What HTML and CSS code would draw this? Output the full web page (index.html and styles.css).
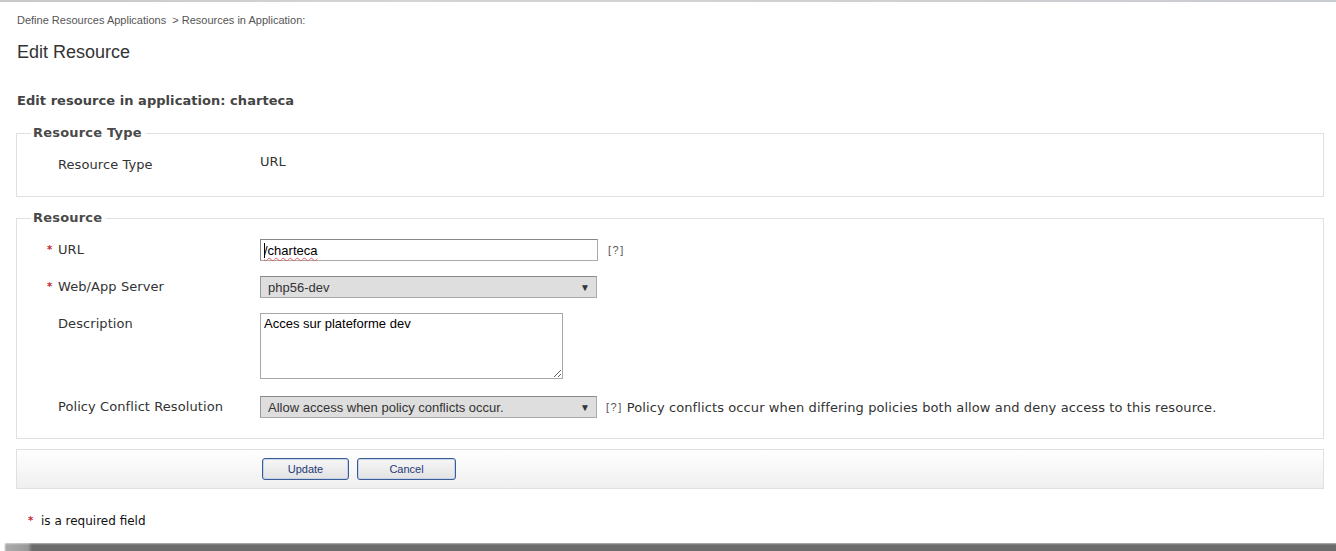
FILE: index.html
```html
<!DOCTYPE html>
<html>
<head>
<meta charset="utf-8">
<title>Edit Resource</title>
<link rel="stylesheet" href="styles.css">
</head>
<body>
<div class="topline"></div>
<div class="page">
  <div class="crumbs">Define Resources Applications&nbsp; &gt; Resources in Application:</div>
  <h1 class="title">Edit Resource</h1>
  <h2 class="subtitle">Edit resource in application: charteca</h2>

  <fieldset class="box box-type">
    <legend>Resource Type</legend>
    <div class="row">
      <div class="lbl">Resource Type</div>
      <div class="val">URL</div>
    </div>
  </fieldset>

  <fieldset class="box box-res">
    <legend>Resource</legend>
    <div class="row">
      <div class="lbl"><span class="req">*</span>URL</div>
      <div class="ctl">
        <div class="input"><span class="caret"></span><span class="spell">/charteca</span></div>
        <span class="help">[?]</span>
      </div>
    </div>
    <div class="row">
      <div class="lbl"><span class="req">*</span>Web/App Server</div>
      <div class="ctl">
        <div class="select"><span>php56-dev</span><span class="arrow">&#9660;</span></div>
      </div>
    </div>
    <div class="row row-top">
      <div class="lbl lbl-top">Description</div>
      <div class="ctl">
        <textarea class="area">Acces sur plateforme dev</textarea>
      </div>
    </div>
    <div class="row">
      <div class="lbl">Policy Conflict Resolution</div>
      <div class="ctl">
        <div class="select"><span>Allow access when policy conflicts occur.</span><span class="arrow">&#9660;</span></div>
        <span class="help help-policy">[?]</span>
        <span class="note">Policy conflicts occur when differing policies both allow and deny access to this resource.</span>
      </div>
    </div>
  </fieldset>

  <div class="bar">
    <button class="btn btn-update">Update</button>
    <button class="btn btn-cancel">Cancel</button>
  </div>

  <div class="required"><span class="req2">*</span>is a required field</div>
</div>
<div class="shadow"></div>
</body>
</html>
```

FILE: styles.css
```css
html, body {
  margin: 0;
  padding: 0;
  background: #fff;
  overflow: hidden;
}
body {
  height: 551px;
  position: relative;
  font-family: "DejaVu Sans", Verdana, sans-serif;
  color: #333;
}
.topline {
  height: 2px;
  background: linear-gradient(to right, #c8c8c8, #d4d4d4 30%, #c9ccd0);
}
.page {
  padding: 0 12px 0 16px;
}
.crumbs {
  margin-top: 11px;
  padding-left: 1px;
  font-family: "Liberation Sans", Arial, sans-serif;
  font-size: 11px;
  line-height: 14px;
  color: #555;
}
.title {
  margin: 14px 0 0 1px;
  font-family: "Liberation Sans", Arial, sans-serif;
  font-weight: normal;
  font-size: 18px;
  line-height: 22px;
  color: #333;
}
.subtitle {
  margin: 30px 0 0 1px;
  font-size: 13px;
  line-height: 16px;
  font-weight: bold;
  letter-spacing: 0.05px;
  color: #444;
}
.box {
  margin: 0;
  border: 1px solid #e0e0e0;
  padding: 0 0 20px 14px;
  min-width: 0;
}
.box legend {
  padding: 0 4px 0 2px;
  font-size: 13px;
  font-weight: bold;
  line-height: 18px;
  letter-spacing: 0.2px;
  color: #4a4a4a;
}
.box-type {
  margin-top: 15px;
}
.box-type .row {
  margin-top: 12px;
}
.box-res {
  margin-top: 12px;
}
.box-res .row {
  margin-top: 15px;
}
.box-res .row:first-of-type {
  margin-top: 12px;
}
.box-res .row:last-child {
  margin-top: 17px;
}
.row {
  display: flex;
  align-items: center;
  min-height: 22px;
  margin-left: 27px;
}
.row-top {
  align-items: flex-start;
}
.lbl {
  width: 202px;
  flex: none;
  font-size: 13px;
  line-height: 16px;
  letter-spacing: 0.08px;
  color: #333;
}
.lbl-top {
  padding-top: 3px;
}
.req {
  display: inline-block;
  width: 11px;
  margin-left: -11px;
  font-size: 10px;
  font-weight: bold;
  color: #c0282d;
  vertical-align: 1px;
}
.val {
  align-self: flex-start;
  font-size: 13px;
  line-height: 16px;
  color: #333;
}
.ctl {
  display: flex;
  align-items: center;
}
.input {
  width: 333px;
  height: 20px;
  border: 1px solid #999;
  border-color: #888 #aaa #aaa #888;
  padding-left: 3px;
  display: flex;
  align-items: center;
  font-family: "Liberation Sans", Arial, sans-serif;
  font-size: 13px;
  color: #000;
}
.caret {
  width: 1px;
  height: 15px;
  background: #000;
  margin-right: -1px;
}
.spell {
  text-decoration: underline wavy #e06060;
  text-decoration-thickness: 1px;
  text-underline-offset: 2px;
}
.help {
  margin-left: 10px;
  font-family: "Liberation Sans", Arial, sans-serif;
  font-size: 11px;
  letter-spacing: 1.5px;
  color: #555;
}
.help-policy {
  margin-left: 9px;
}
.note {
  margin-left: 4px;
  font-size: 13px;
  letter-spacing: 0.1px;
  color: #333;
}
.select {
  box-sizing: border-box;
  width: 337px;
  height: 22px;
  border: 1px solid #a0a0a0;
  border-color: #888 #aaa #aaa #999;
  background: #dedede;
  padding: 0 6px 0 7px;
  display: flex;
  align-items: center;
  justify-content: space-between;
  font-family: "Liberation Sans", Arial, sans-serif;
  font-size: 13px;
  color: #333;
}
.arrow {
  font-size: 10px;
  color: #333;
}
.area {
  box-sizing: border-box;
  width: 303px;
  height: 66px;
  margin: 0;
  border: 1px solid #a8a8a8;
  padding: 2px 3px;
  font-family: "Liberation Sans", Arial, sans-serif;
  font-size: 13px;
  color: #000;
  resize: both;
  display: block;
}
.bar {
  margin-top: 10px;
  height: 38px;
  border: 1px solid #e0e0e0;
  background: linear-gradient(#ffffff, #efefef);
  display: flex;
  align-items: center;
  gap: 8px;
  padding-left: 245px;
}
.btn {
  box-sizing: border-box;
  height: 22px;
  margin: 0;
  padding: 0;
  border: 1px solid #3a5b96;
  border-radius: 3px;
  background: linear-gradient(#f7f7f7, #e2e2e2);
  box-shadow: inset 0 0 0 1px #c5d3e8;
  font-family: "Liberation Sans", Arial, sans-serif;
  font-size: 11px;
  color: #1e3a78;
}
.btn-update {
  width: 87px;
}
.btn-cancel {
  width: 99px;
}
.required {
  margin-top: 24px;
  padding-left: 12px;
  font-size: 12px;
  line-height: 16px;
  color: #111;
}
.req2 {
  display: inline-block;
  width: 13px;
  font-size: 10px;
  font-weight: bold;
  color: #c0282d;
  vertical-align: 1px;
}
.shadow {
  position: absolute;
  left: 0;
  right: 0;
  bottom: 0;
  height: 8px;
  background: linear-gradient(to right, #fff 0, #fff 4px, #aaa 6px, #999 28px, #6c6c6c 32px, #6c6c6c 100%);
}
.shadow::after {
  content: "";
  position: absolute;
  left: 0;
  right: 0;
  top: 0;
  height: 2px;
  background: linear-gradient(to bottom, rgba(255,255,255,0.5), rgba(255,255,255,0));
}
```
